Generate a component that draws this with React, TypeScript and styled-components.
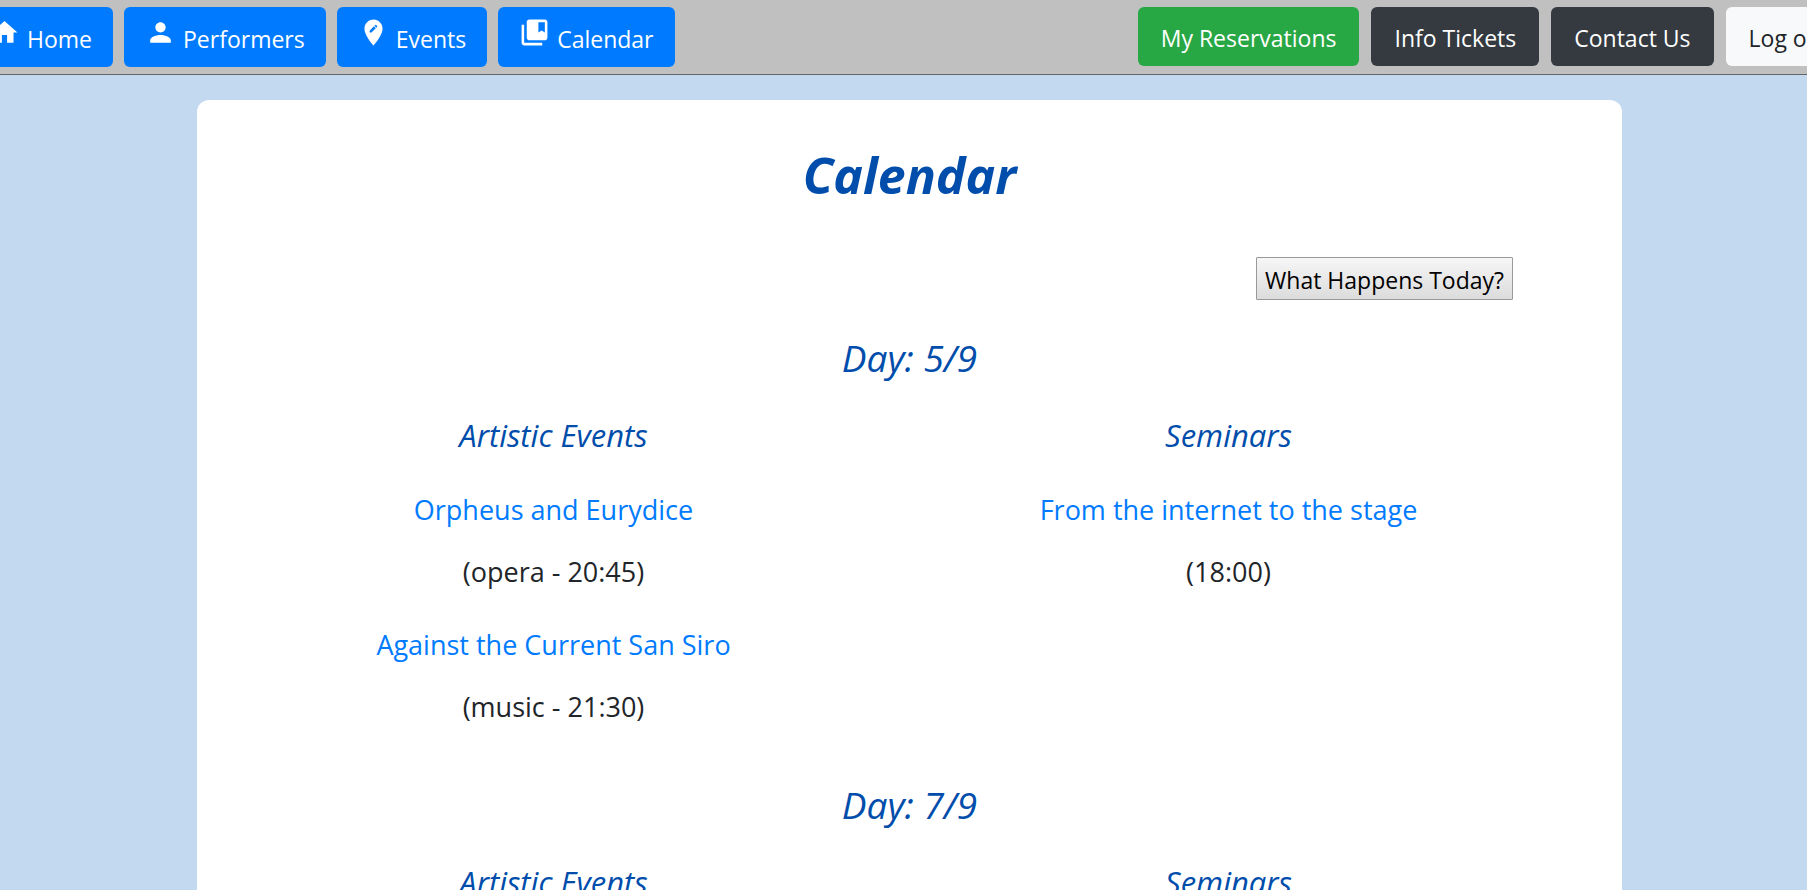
import React from "react";
import styled, { createGlobalStyle, css } from "styled-components";
import {
  MdHome,
  MdPerson,
  MdEditLocation,
  MdCollectionsBookmark,
} from "react-icons/md";

const GlobalStyle = createGlobalStyle`
  *, *::before, *::after { box-sizing: border-box; }
  body {
    margin: 0;
    overflow-x: hidden;
    background: #c3d9ef;
    color: #212529;
    font-family: "Segoe UI", "Open Sans", "Noto Sans", sans-serif;
    font-size: 27px;
    line-height: 40px;
  }
`;

const Header = styled.header`
  height: 75px;
  overflow: hidden;
  background: #c0c0c0;
  border-bottom: 1px solid #666;
`;

const Bar = styled.div`
  display: flex;
  justify-content: space-between;
  align-items: flex-start;
  margin: 0 -45px 0 -32px;
  padding-top: 7px;
`;

const Group = styled.nav<{ $gap: number }>`
  display: flex;
  flex: none;
  gap: ${(p) => p.$gap}px;
`;

const tones = {
  primary: css`
    background: #007bff;
    color: #fff;
  `,
  success: css`
    background: #28a745;
    color: #fff;
  `,
  dark: css`
    background: #343a40;
    color: #fff;
  `,
  light: css`
    background: #f8f9fa;
    color: #212529;
  `,
};

const NavLink = styled.a<{ $tone: keyof typeof tones }>`
  display: flex;
  align-items: center;
  height: 59px;
  padding: 3px 23px 0;
  border-radius: 6px;
  font-size: 23px;
  line-height: 36px;
  text-decoration: none;
  white-space: nowrap;
  ${(p) => tones[p.$tone]}
`;

const IconLink = styled(NavLink)`
  height: 60px;
  gap: 7px;
  padding: 4px 21px 0;

  svg {
    flex: none;
    width: 31px;
    height: 31px;
    margin-bottom: 13px;
  }
`;

const Card = styled.main`
  margin: 25px 185px 0 197px;
  padding-top: 45px;
  min-height: 100vh;
  border-radius: 12px;
  background: #fff;
`;

const Title = styled.h1`
  margin: 0;
  color: #004dab;
  font-size: 50px;
  font-style: italic;
  font-weight: 700;
  line-height: 60px;
  text-align: center;
`;

const Actions = styled.div`
  display: flex;
  justify-content: flex-end;
  margin-top: 52px;
  padding-right: 109px;
`;

const TodayButton = styled.button`
  height: 43px;
  padding: 3px 8px 0;
  border: 1px solid #999;
  border-radius: 1px;
  background: linear-gradient(#f6f6f6, #dcdcdc);
  color: #000;
  font-family: inherit;
  font-size: 23px;
  line-height: 36px;
`;

const Day = styled.section`
  margin-top: 36px;

  & + & {
    margin-top: 56px;
  }
`;

const DayTitle = styled.h2`
  margin: 0;
  color: #004dab;
  font-size: 37px;
  font-style: italic;
  font-weight: 400;
  line-height: 44px;
  text-align: center;
`;

const Columns = styled.div`
  display: grid;
  grid-template-columns: 1fr 1fr;
  margin: 35px 56px 0 19px;
  text-align: center;
`;

const ColumnTitle = styled.h3`
  margin: 0 0 35px;
  color: #004dab;
  font-size: 31px;
  font-style: italic;
  font-weight: 400;
  line-height: 40px;
`;

const Entry = styled.article`
  & + & {
    margin-top: 33px;
  }
`;

const EntryLink = styled.a`
  color: #007bff;
  text-decoration: none;
`;

const EntryTime = styled.p`
  margin: 22px 0 0;
`;

type Item = { name: string; time: string };

const days: { date: string; artistic: Item[]; seminars: Item[] }[] = [
  {
    date: "5/9",
    artistic: [
      { name: "Orpheus and Eurydice", time: "(opera - 20:45)" },
      { name: "Against the Current San Siro", time: "(music - 21:30)" },
    ],
    seminars: [{ name: "From the internet to the stage", time: "(18:00)" }],
  },
  { date: "7/9", artistic: [], seminars: [] },
];

function Column({ title, items }: { title: string; items: Item[] }) {
  return (
    <div>
      <ColumnTitle>{title}</ColumnTitle>
      {items.map((item) => (
        <Entry key={item.name}>
          <EntryLink href="#">{item.name}</EntryLink>
          <EntryTime>{item.time}</EntryTime>
        </Entry>
      ))}
    </div>
  );
}

export default function App() {
  return (
    <>
      <GlobalStyle />
      <Header>
        <Bar>
          <Group $gap={11} aria-label="Main">
            <IconLink $tone="primary" href="#"><MdHome />Home</IconLink>
            <IconLink $tone="primary" href="#"><MdPerson />Performers</IconLink>
            <IconLink $tone="primary" href="#"><MdEditLocation />Events</IconLink>
            <IconLink $tone="primary" href="#"><MdCollectionsBookmark />Calendar</IconLink>
          </Group>
          <Group $gap={12} aria-label="Account">
            <NavLink $tone="success" href="#">My Reservations</NavLink>
            <NavLink $tone="dark" href="#">Info Tickets</NavLink>
            <NavLink $tone="dark" href="#">Contact Us</NavLink>
            <NavLink $tone="light" href="#">Log out</NavLink>
          </Group>
        </Bar>
      </Header>
      <Card>
        <Title>Calendar</Title>
        <Actions>
          <TodayButton type="button">What Happens Today?</TodayButton>
        </Actions>
        {days.map((day) => (
          <Day key={day.date}>
            <DayTitle>Day: {day.date}</DayTitle>
            <Columns>
              <Column title="Artistic Events" items={day.artistic} />
              <Column title="Seminars" items={day.seminars} />
            </Columns>
          </Day>
        ))}
      </Card>
    </>
  );
}
